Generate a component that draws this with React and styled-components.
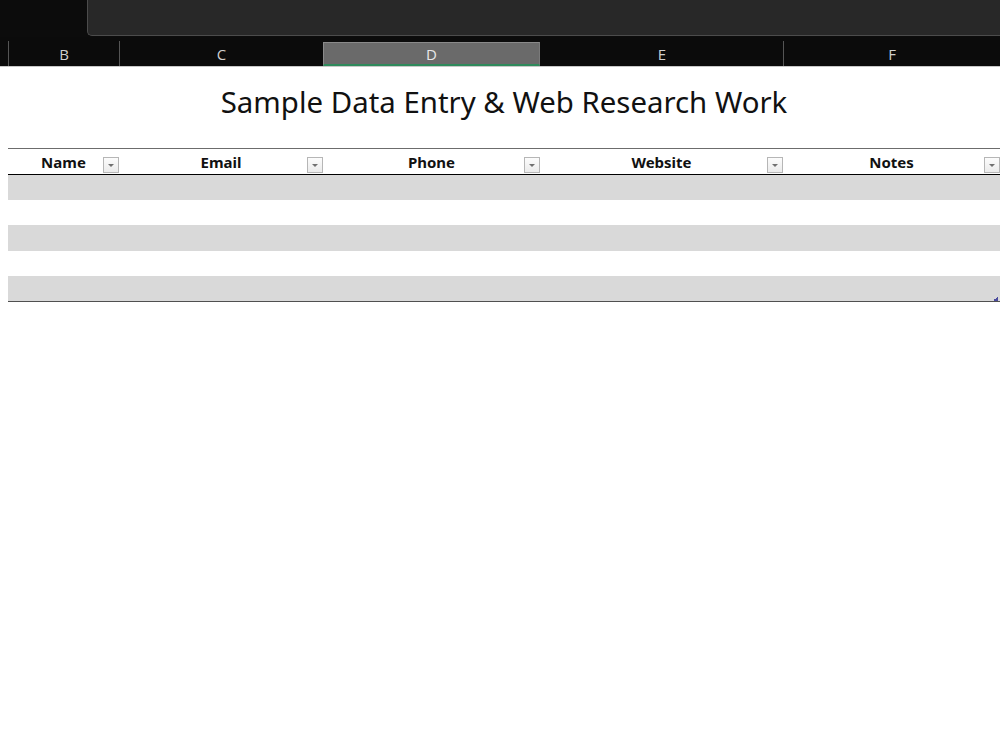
import React from "react";
import styled, { createGlobalStyle } from "styled-components";

const Global = createGlobalStyle`
  html, body { margin: 0; padding: 0; background: #ffffff; }
  #root { width: 1000px; height: 750px; overflow: hidden; }
`;

const COLS = "8px 111px 204px 217px 243px 217px";

const Page = styled.div`
  width: 1000px;
  height: 750px;
  display: flex;
  flex-direction: column;
  background: #ffffff;
`;

const TopBar = styled.div`
  height: 37px;
  display: flex;
  background: #0c0c0c;
`;

const NameArea = styled.div`
  width: 87px;
  flex: none;
`;

const FormulaBox = styled.div`
  flex: 1;
  height: 36px;
  background: #282828;
  border: 1px solid #4c4c4c;
  border-top: none;
  border-right: none;
  border-bottom-left-radius: 5px;
  box-sizing: border-box;
`;

const ColumnHeaderRow = styled.div`
  height: 30px;
  display: grid;
  grid-template-columns: ${COLS};
  background: #0b0b0b;
  border-bottom: 1px solid #c8c8c8;
  box-sizing: border-box;
  align-items: end;
`;

const ColumnLabel = styled.div`
  height: ${(p) => (p.$selected ? "24px" : "25px")};
  display: flex;
  align-items: center;
  justify-content: center;
  font-family: "Open Sans", "Liberation Sans", sans-serif;
  font-size: 15px;
  color: ${(p) => (p.$selected ? "#e8e8e8" : "#cfcfcf")};
  background: ${(p) => (p.$selected ? "#6a6a6a" : "transparent")};
  border-left: 1px solid ${(p) => (p.$selected ? "#8a8a8a" : p.$edge ? "#555555" : "transparent")};
  border-top: ${(p) => (p.$selected ? "1px solid #8a8a8a" : "none")};
  border-right: ${(p) => (p.$selected ? "1px solid #7a7a7a" : "none")};
  border-bottom: ${(p) => (p.$selected ? "2px solid #2f8a5c" : "none")};
  box-sizing: border-box;
  padding-top: 1px;
`;

const Sheet = styled.div`
  flex: 1;
  display: flex;
  flex-direction: column;
  background: #ffffff;
`;

const TitleRow = styled.div`
  height: 81px;
  display: flex;
  justify-content: center;
  align-items: flex-start;
  padding-top: 15px;
  box-sizing: border-box;
`;

const Title = styled.h1`
  margin: 0;
  font-family: "Noto Sans", "Liberation Sans", sans-serif;
  font-weight: 400;
  font-size: 29.4px;
  line-height: 40px;
  color: #111111;
  padding-left: 8px;
`;

const Table = styled.div`
  margin-left: 8px;
  display: flex;
  flex-direction: column;
  border-top: 1px solid #6c6c6c;
  border-bottom: 1px solid #505050;
  position: relative;
`;

const HeaderRow = styled.div`
  display: grid;
  grid-template-columns: 111px 204px 217px 243px 217px;
  height: 26px;
  border-bottom: 1px solid #000000;
  box-sizing: border-box;
`;

const HeaderCell = styled.div`
  display: grid;
  grid-template-areas: "cell";
  align-items: center;
`;

const HeaderText = styled.span`
  grid-area: cell;
  justify-self: center;
  font-family: "Noto Sans", "Liberation Sans", sans-serif;
  font-weight: 700;
  font-size: 15px;
  color: #111111;
  padding-top: 1px;
`;

const FilterButton = styled.span`
  grid-area: cell;
  justify-self: end;
  align-self: end;
  margin-bottom: 1px;
  width: 16px;
  height: 16px;
  box-sizing: border-box;
  border: 1px solid #b6b6b6;
  background: linear-gradient(#fcfcfc, #ebebeb);
  display: flex;
  align-items: center;
  justify-content: center;
  &::after {
    content: "";
    width: 0;
    height: 0;
    border-left: 3px solid transparent;
    border-right: 3px solid transparent;
    border-top: 3.5px solid #707070;
    margin-top: 1px;
  }
`;

const DataRow = styled.div`
  height: ${(p) => (p.$tall ? "26px" : "25px")};
  background: ${(p) => (p.$banded ? "#d9d9d9" : "#ffffff")};
`;

const ResizeHandle = styled.span`
  position: absolute;
  right: 2px;
  bottom: 0;
  width: 5px;
  height: 5px;
  background: linear-gradient(135deg, transparent 50%, #4b4b9e 50%);
`;

const columns = [
  { key: "A", label: "" },
  { key: "B", label: "B" },
  { key: "C", label: "C" },
  { key: "D", label: "D", selected: true },
  { key: "E", label: "E" },
  { key: "F", label: "F" },
];

const headers = ["Name", "Email", "Phone", "Website", "Notes"];
const rows = [
  { banded: true },
  { banded: false },
  { banded: true, tall: true },
  { banded: false },
  { banded: true },
];

export default function App() {
  return (
    <Page>
      <Global />
      <TopBar>
        <NameArea />
        <FormulaBox />
      </TopBar>
      <ColumnHeaderRow>
        {columns.map((c) => (
          <ColumnLabel
            key={c.key}
            $selected={c.selected}
            $edge={c.key === "B" || c.key === "C" || c.key === "F"}
          >
            {c.label}
          </ColumnLabel>
        ))}
      </ColumnHeaderRow>
      <Sheet>
        <TitleRow>
          <Title>Sample Data Entry &amp; Web Research Work</Title>
        </TitleRow>
        <Table>
          <HeaderRow>
            {headers.map((h) => (
              <HeaderCell key={h}>
                <HeaderText>{h}</HeaderText>
                <FilterButton />
              </HeaderCell>
            ))}
          </HeaderRow>
          {rows.map((r, i) => (
            <DataRow key={i} $banded={r.banded} $tall={r.tall} />
          ))}
          <ResizeHandle />
        </Table>
      </Sheet>
    </Page>
  );
}
